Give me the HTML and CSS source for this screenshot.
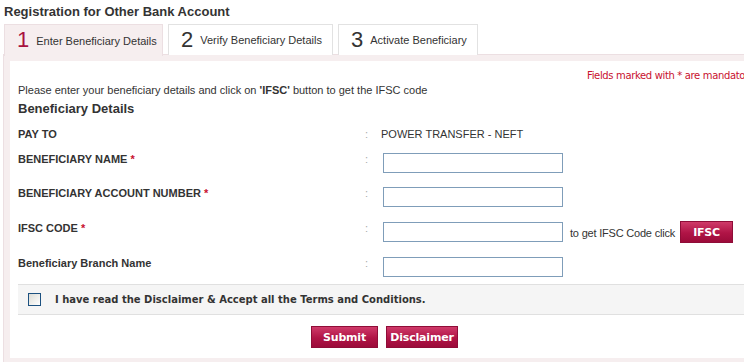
FILE: index.html
```html
<!DOCTYPE html>
<html>
<head>
<meta charset="utf-8">
<link rel="stylesheet" href="styles.css">
</head>
<body>
<div class="page">
  <h1 class="title">Registration for Other Bank Account</h1>
  <div class="tabs">
    <div class="tab active"><span class="num">1</span><span class="tab-label">Enter Beneficiary Details</span></div>
    <div class="tab t2"><span class="num">2</span><span class="tab-label">Verify Beneficiary Details</span></div>
    <div class="tab t3"><span class="num">3</span><span class="tab-label">Activate Beneficiary</span></div>
  </div>
  <div class="panel">
    <div class="inner">
      <div class="mandatory">Fields marked with * are mandatory</div>
      <p class="intro">Please enter your beneficiary details and click on <b>'IFSC'</b> button to get the IFSC code</p>
      <h2 class="section">Beneficiary Details</h2>
      <div class="row payto">
        <div class="label">PAY TO</div>
        <div class="colon">:</div>
        <div class="value">POWER TRANSFER - NEFT</div>
      </div>
      <div class="row first">
        <div class="label">BENEFICIARY NAME <span class="req">*</span></div>
        <div class="colon">:</div>
        <input class="field" type="text">
      </div>
      <div class="row">
        <div class="label">BENEFICIARY ACCOUNT NUMBER <span class="req">*</span></div>
        <div class="colon">:</div>
        <input class="field" type="text">
      </div>
      <div class="row">
        <div class="label">IFSC CODE <span class="req">*</span></div>
        <div class="colon">:</div>
        <input class="field" type="text">
        <span class="hint">to get IFSC Code click</span>
        <button class="btn ifsc" type="button">IFSC</button>
      </div>
      <div class="row">
        <div class="label">Beneficiary Branch Name</div>
        <div class="colon">:</div>
        <input class="field" type="text">
      </div>
      <div class="agree">
        <span class="box"></span>
        <span class="agree-text">I have read the Disclaimer &amp; Accept all the Terms and Conditions.</span>
      </div>
      <div class="actions">
        <button class="btn submit" type="button">Submit</button>
        <button class="btn disc" type="button">Disclaimer</button>
      </div>
    </div>
  </div>
</div>
</body>
</html>
```
FILE: styles.css
```css
html, body {
  margin: 0;
  padding: 0;
  background: #fff;
  overflow: hidden;
}
body {
  font-family: "Liberation Sans", Arial, sans-serif;
  color: #333;
  font-size: 11px;
}
.page {
  width: 790px;
}
.title {
  margin: 0;
  padding: 4px 0 0 4px;
  height: 20px;
  font-size: 13px;
  font-weight: bold;
  color: #333;
  line-height: 16px;
}
.tabs {
  display: flex;
  gap: 5px;
  padding-left: 4px;
  height: 30px;
}
.tab {
  box-sizing: border-box;
  height: 31px;
  border: 1px solid #e2e2e2;
  border-bottom: none;
  background: #fff;
  display: flex;
  align-items: center;
  padding-left: 12px;
  position: relative;
  z-index: 1;
  white-space: nowrap;
}
.tab.active {
  width: 159px;
  height: 32px;
  background: #f6eeef;
  border-color: #ecdfe2;
}
.tab.t2 { width: 165px; padding-left: 12px; }
.tab.t3 { width: 140px; }
.num {
  font-size: 22px;
  line-height: 22px;
  font-weight: normal;
  color: #333;
  margin-right: 7px;
  margin-top: -1px;
}
.active .num { color: #a8123f; }
.tab-label {
  font-size: 11px;
  color: #333;
}
.panel {
  margin-left: 3px;
  border: 1px solid #ecdfe2;
  background: #f6eeef;
  padding: 6px;
}
.inner {
  background: #fff;
  padding: 8px 0 10px 8px;
  position: relative;
  height: 297px;
  box-sizing: border-box;
}
.mandatory {
  font-family: "DejaVu Sans", Verdana, sans-serif;
  font-size: 10px;
  letter-spacing: -0.35px;
  color: #c8102e;
  margin-left: 569px;
  height: 13px;
  line-height: 13px;
  white-space: nowrap;
}
.intro {
  margin: 1px 0 0 0;
  line-height: 14px;
  font-size: 11px;
  color: #333;
}
.section {
  margin: 4px 0 0 0;
  font-size: 13px;
  line-height: 16px;
  font-weight: bold;
  color: #333;
}
.row {
  display: flex;
  align-items: flex-start;
  height: 35px;
}
.row.payto {
  height: 25px;
  margin-top: 10px;
}
.row.first {
  height: 34px;
}
.label {
  width: 347px;
  font-weight: bold;
  font-size: 11px;
  line-height: 14px;
  color: #333;
}
.req { color: #c8102e; }
.colon {
  width: 18px;
  color: #aaa;
  font-size: 11px;
  line-height: 14px;
}
.value {
  font-size: 11px;
  line-height: 14px;
  margin-left: -2px;
}
.field {
  box-sizing: border-box;
  width: 180px;
  height: 20px;
  margin: 1px 0 0 0;
  border: 1px solid #7f9db9;
  padding: 0 2px;
  background: #fff;
}
.hint {
  font-size: 11px;
  letter-spacing: -0.2px;
  line-height: 14px;
  margin: 5px 0 0 7px;
  color: #333;
  white-space: nowrap;
}
.btn {
  font-family: "DejaVu Sans", Verdana, sans-serif;
  font-weight: bold;
  font-size: 11px;
  color: #fff;
  border: 1px solid #8f0d38;
  background: linear-gradient(#cf3a69, #b01446 55%, #9c0b3a);
  height: 22px;
  padding: 0;
  cursor: pointer;
  letter-spacing: -0.2px;
}
.ifsc {
  width: 53px;
  margin-left: 5px;
}
.agree {
  display: flex;
  align-items: center;
  height: 29px;
  margin-top: -7px;
  background: #f5f5f5;
  border-top: 1px solid #e0e0e0;
  border-bottom: 1px solid #e0e0e0;
}
.box {
  box-sizing: border-box;
  width: 13px;
  height: 13px;
  border: 1px solid #1c5180;
  background: linear-gradient(135deg, #dcdcd5, #fff);
  margin-left: 10px;
}
.agree-text {
  font-family: "DejaVu Sans", Verdana, sans-serif;
  font-weight: bold;
  font-size: 10px;
  color: #333;
  margin-left: 14px;
}
.actions {
  display: flex;
  gap: 8px;
  padding-left: 293px;
  margin-top: 11px;
}
.submit { width: 67px; }
.disc { width: 72px; }
```
